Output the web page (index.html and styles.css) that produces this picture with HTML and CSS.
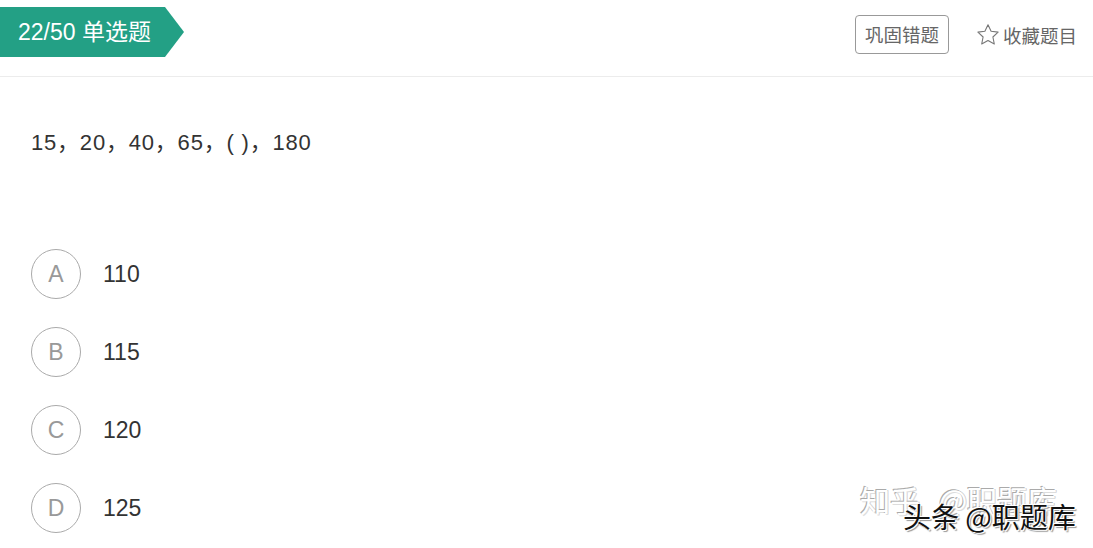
FILE: index.html
```html
<!DOCTYPE html>
<html lang="zh-CN">
<head>
<meta charset="utf-8">
<title>22/50 单选题</title>
<link rel="stylesheet" href="styles.css">
</head>
<body>
<div class="page">
  <header class="topbar">
    <div class="badge">22/50 单选题</div>
    <div class="actions">
      <button class="btn-wrong">巩固错题</button>
      <div class="fav">
        <svg class="star" viewBox="0 0 24 24" width="24" height="24"><path d="M12 1.8l3.1 6.4 7 .9-5.2 4.9 1.4 7L12 17.5l-6.3 3.5 1.4-7-5.2-4.9 7-.9z" fill="none" stroke="#777" stroke-width="1.1" stroke-linejoin="round"/></svg>
        <span>收藏题目</span>
      </div>
    </div>
  </header>
  <main class="content">
    <p class="question">15，20，40，65，(&nbsp;)，180</p>
    <ul class="options">
      <li class="option"><span class="letter">A</span><span class="value">110</span></li>
      <li class="option"><span class="letter">B</span><span class="value">115</span></li>
      <li class="option"><span class="letter">C</span><span class="value">120</span></li>
      <li class="option"><span class="letter">D</span><span class="value">125</span></li>
    </ul>
  </main>
  <div class="wm wm-zhihu">知乎 @职题库</div>
  <div class="wm wm-toutiao">头条 @职题库</div>
</div>
</body>
</html>
```

FILE: styles.css
```css
* { box-sizing: border-box; }
html, body { margin: 0; padding: 0; background: #fff; }
body {
  font-family: "Liberation Sans", Arial, "Noto Sans CJK SC", sans-serif;
  color: #333;
}
.page { position: relative; width: 1093px; height: 548px; overflow: hidden; }
.topbar {
  height: 77px;
  border-bottom: 1px solid #ececec;
  display: flex;
  justify-content: space-between;
  align-items: flex-start;
}
.badge {
  margin-top: 7px;
  height: 50px;
  width: 184px;
  padding-left: 18px;
  background: #23a085;
  color: #fff;
  font-size: 23px;
  line-height: 50px;
  clip-path: polygon(0 0, 165px 0, 184px 25px, 165px 50px, 0 50px);
}
.actions {
  display: flex;
  align-items: center;
  margin-top: 15px;
  margin-right: 16px;
}
.btn-wrong {
  height: 39px;
  width: 94px;
  border: 1px solid #999;
  border-radius: 4px;
  background: #fff;
  color: #666;
  font-family: "Noto Sans CJK SC", sans-serif;
  font-size: 18.5px;
  padding: 0;
  line-height: 37px;
}
.fav {
  display: flex;
  align-items: center;
  margin-left: 27px;
  color: #666;
  font-family: "Noto Sans CJK SC", sans-serif;
  font-size: 18.5px;
  height: 39px;
}
.fav .star { margin-right: 3px; }
.content { padding-left: 31px; }
.question {
  margin: 52px 0 0;
  font-size: 22px;
  letter-spacing: 0.8px;
  line-height: 28px;
  color: #333;
}
.options { list-style: none; margin: 92px 0 0; padding: 0; display: flex; flex-direction: column; gap: 28px; }
.option { display: flex; align-items: center; height: 50px; }
.letter {
  width: 50px; height: 50px;
  border: 1px solid #aaa;
  border-radius: 50%;
  display: flex; align-items: center; justify-content: center;
  color: #999;
  font-size: 23px;
}
.value { margin-left: 22px; font-size: 23px; color: #333; }
.wm {
  position: absolute;
  font-family: "Noto Sans CJK SC", sans-serif;
  white-space: nowrap;
  line-height: 1.2;
}
.wm-zhihu {
  left: 860px; top: 481px;
  font-size: 30px;
  word-spacing: 12px;
  color: #fff;
  text-shadow: -1px -1px 0 #aaa, 1px 1px 0 #ddd, 1px 0 0 #ccc;
}
.wm-toutiao {
  left: 903px; top: 500px;
  font-size: 28px;
  color: #111;
  text-shadow: 1px 1px 0 #fff, -1px -1px 0 #fff, 2px 2px 1px #999;
}
```
